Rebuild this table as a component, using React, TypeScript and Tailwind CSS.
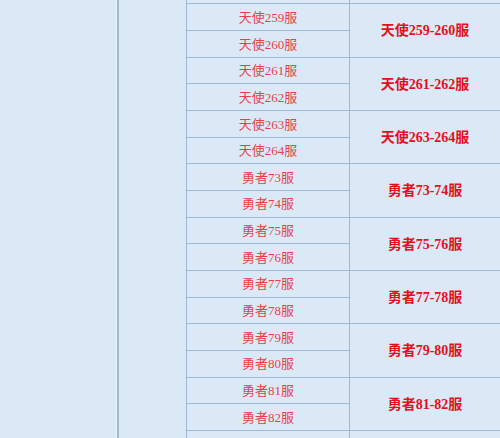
import React from "react";

type Group = { a: string; b: string; merged: string };

// first and last groups are only partly in view, so they carry no text
const groups: Group[] = [
  { a: "", b: "", merged: "" },
  { a: "天使259服", b: "天使260服", merged: "天使259-260服" },
  { a: "天使261服", b: "天使262服", merged: "天使261-262服" },
  { a: "天使263服", b: "天使264服", merged: "天使263-264服" },
  { a: "勇者73服", b: "勇者74服", merged: "勇者73-74服" },
  { a: "勇者75服", b: "勇者76服", merged: "勇者75-76服" },
  { a: "勇者77服", b: "勇者78服", merged: "勇者77-78服" },
  { a: "勇者79服", b: "勇者80服", merged: "勇者79-80服" },
  { a: "勇者81服", b: "勇者82服", merged: "勇者81-82服" },
  { a: "", b: "", merged: "" },
];

function ServerGroup({ g }: { g: Group }) {
  return (
    <div className="flex">
      <div className="flex w-[163px] flex-col border-r border-[#9fb9d5]">
        <div className="flex h-[26.667px] items-center justify-center border-b border-[#9fb9d5] pt-px text-[13px] text-[#e63f4a]">
          {g.a}
        </div>
        <div className="flex h-[26.667px] items-center justify-center border-b border-[#9fb9d5] pt-px text-[13px] text-[#e63f4a]">
          {g.b}
        </div>
      </div>
      <div className="flex flex-1 items-center justify-center border-b border-[#9fb9d5] pt-px text-[14px] font-bold text-[#e3101c]">
        {g.merged}
      </div>
    </div>
  );
}

export default function App() {
  return (
    <div
      className="flex h-[438px] w-[500px] overflow-hidden bg-[#dbe9f7]"
      style={{ fontFamily: '"Liberation Serif", "Noto Sans CJK SC", serif' }}
    >
      <div className="w-[116px] shrink-0" />
      <div className="w-px shrink-0 bg-[#e6f0fa]" />
      <div className="w-[2px] shrink-0 bg-[#a5b9d0]" />
      <div className="w-[67px] shrink-0" />
      <div className="mt-[-49px] flex flex-1 flex-col border-l border-[#9fb9d5]">
        {groups.map((g, i) => (
          <ServerGroup key={i} g={g} />
        ))}
      </div>
    </div>
  );
}
